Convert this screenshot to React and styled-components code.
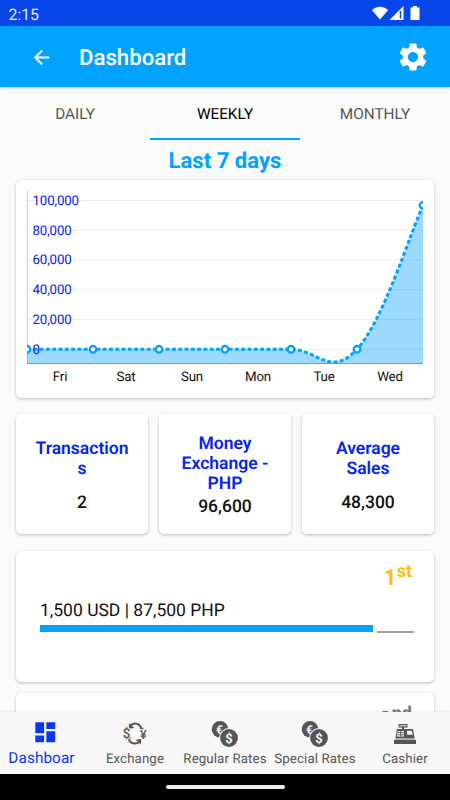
import React, { useState } from 'react';
import styled, { createGlobalStyle } from 'styled-components';
import { MdArrowBack, MdDashboard, MdSettings } from 'react-icons/md';

const GlobalStyle = createGlobalStyle`
  * {
    box-sizing: border-box;
  }
  body {
    margin: 0;
    background: #fafafa;
    font-family: Roboto, "Liberation Sans", sans-serif;
    text-rendering: geometricPrecision;
  }
`;

const Screen = styled.div`
  display: flex;
  flex-direction: column;
  width: 450px;
  height: 800px;
  overflow: hidden;
  background: #fafafa;
`;
const StatusBar = styled.div`
  display: flex;
  flex: none;
  align-items: center;
  justify-content: space-between;
  height: 26px;
  padding: 1px 29px 0 8.5px;
  font-size: 15.8px;
  color: #e4ecff;
  background: #0746e8;
`;
StatusBar.Time = styled.span`
  padding-top: 2px;
`;
const Header = styled.header`
  position: relative;
  display: flex;
  flex: none;
  align-items: center;
  height: 61px;
  padding: 1px 20px 0 30px;
  color: #fff;
  background: #00a2ff;
  box-shadow: 0 1px 3px rgba(0,0,0,.22);
`;
Header.Title = styled.h1`
  flex: 1;
  margin: 0 0 0 26px;
  padding-top: 2px;
  font-size: 22.2px;
  font-weight: 500;
`;
const Tabs = styled.div`
  display: flex;
  flex: none;
  height: 53px;
`;
const Tab = styled.button`
  flex: 1;
  padding: 3px 0 0;
  font-family: inherit;
  font-size: 15.3px;
  line-height: 20px;
  text-rendering: inherit;
  color: ${props => (props.$active ? '#000' : '#555')};
  background: none;
  border: 0;
  border-bottom: 2px solid ${props => (props.$active ? '#00a2ff' : 'transparent')};
`;
const Content = styled.main`
  display: flex;
  flex: 1;
  flex-direction: column;
  min-height: 0;
  padding: 0 16px;
  overflow: hidden;
`;
const Period = styled.h2`
  flex: none;
  height: 40px;
  margin: 0;
  font-size: 22.1px;
  font-weight: 700;
  line-height: 43px;
  color: #00a2ff;
  text-align: center;
`;
const Card = styled.section`
  flex: none;
  background: #fff;
  border-radius: 5px;
  box-shadow: 0 1px 3px rgba(0,0,0,.26);
`;
const ChartCard = styled(Card)`
  height: 217.5px;
  margin-bottom: 16.5px;
`;
const ChartSvg = styled.svg`
  display: block;
  font-family: Roboto, sans-serif;
  font-size: 13.3px;
  letter-spacing: -.15px;
`;
const Stats = styled.div`
  display: grid;
  flex: none;
  grid-template-columns: repeat(3, 132px);
  gap: 11px;
  height: 120px;
  margin-bottom: 16.5px;
`;
const StatCard = styled(Card)`
  display: flex;
  flex-direction: column;
  gap: ${props => (props.$tight ? '1px' : '11px')};
  align-items: center;
  padding-top: ${props => (props.$tight ? '19.500px' : '25px')};
`;
StatCard.Label = styled.div`
  width: 96px;
  font-size: 17.5px;
  font-weight: 600;
  line-height: 20.3px;
  color: #0524ec;
  text-align: center;
  word-break: break-word;
`;
StatCard.Value = styled.div`
  font-size: 17.5px;
  font-weight: 500;
  line-height: 24px;
  color: #111;
`;
const RankCard = styled(Card)`
  display: flex;
  flex-direction: column;
  height: 131.5px;
  margin-bottom: 10.5px;
  padding: 12px 20px 0 24px;
`;
const Place = styled.div`
  display: flex;
  align-self: flex-end;
  height: 37px;
  padding-right: 2px;
  font-size: 22.4px;
  font-weight: 700;
  line-height: 31px;
  color: ${props => props.$color};
`;
Place.Suffix = styled.span`
  font-size: 18px;
  line-height: 18px;
`;
const Amount = styled.div`
  height: 25px;
  font-size: 17.5px;
  line-height: 23px;
  color: #111;
`;
const Progress = styled.div`
  display: flex;
  gap: 4px;
  align-items: flex-end;
  height: 8.5px;
`;
Progress.Done = styled.div`
  height: 7.5px;
  margin-bottom: 1px;
  background: #00a2ff;
`;
Progress.Rest = styled.div`
  flex: 1;
  height: 2px;
  background: #a3a3a3;
`;
const BottomNav = styled.nav`
  position: relative;
  display: grid;
  flex: none;
  grid-template-columns: repeat(5, 1fr);
  height: 62px;
  background: #f7f7f7;
  box-shadow: 0 -1px 2px rgba(0,0,0,.06);
`;
const NavItem = styled.button`
  display: flex;
  flex-direction: column;
  align-items: center;
  padding: ${props => (props.$active ? '5px' : '7px')} 0 0;
  font-family: inherit;
  text-rendering: inherit;
  color: ${props => (props.$active ? '#0738f0' : '#555')};
  background: none;
  border: 0;
`;
NavItem.Icon = styled.span`
  display: flex;
  align-items: center;
  justify-content: center;
  height: 30px;
`;
NavItem.Label = styled.span`
  padding-top: ${props => (props.$active ? '1px' : 0)};
  padding-right: ${props => (props.$active ? '7px' : 0)};
  font-size: ${props => (props.$active ? '15.3px' : '13.3px')};
  line-height: 21px;
  letter-spacing: .1px;
  white-space: nowrap;
`;
const GestureBar = styled.div`
  display: flex;
  flex: none;
  align-items: center;
  justify-content: center;
  height: 26px;
  background: #000;
`;
GestureBar.Handle = styled.div`
  width: 119px;
  height: 4px;
  background: #eee;
  border-radius: 2px;
`;

const StatusIcons = () => (
  <svg width="52" height="20" viewBox="0 0 52 20">
    <path d="M2.800 6Q11 -.5 19.200 6L11 15.500Z" fill="#fff" />
    <path d="M20.500 16L34.500 2V16Z" fill="#fff" />
    <path d="M31.500 7V14.500" stroke="#0746e8" strokeWidth="1.500" />
    <path d="M41.500 3.500h2.500V2h4v1.500h2.500V16H41.500V3.500Z" fill="#fff" />
  </svg>
);

const ExchangeIcon = () => (
  <svg width="30" height="28" viewBox="0 0 30 28" fill="currentColor" textAnchor="middle">
    <path d="M10.500 5.500Q15 1.800 19 4.800Q21 6.500 21.500 9" fill="none" stroke="currentColor" strokeWidth="2" />
    <path d="M9 3.200l-.3 5.600 5.600-.8zM23.800 7.500l-1.500 4.200-4-2.200z" />
    <path d="M8.500 18.500Q9.500 22.500 13 23.300Q16.500 24 19.500 22" fill="none" stroke="currentColor" strokeWidth="2" />
    <path d="M21 24.500l.3-5.600-5.600.8zM6.200 20l1.500-4.200 4 2.200z" />
    <text x="6.500" y="18.200" fontSize="13.500" fontWeight="500" stroke="#f7f7f7" strokeWidth="2" paintOrder="stroke">$</text>
    <text x="23.300" y="18.500" fontSize="12.500" fontWeight="500" stroke="#f7f7f7" strokeWidth="2" paintOrder="stroke">¥</text>
  </svg>
);

const RatesIcon = () => (
  <svg width="28" height="28" viewBox="0 0 28 28" fontWeight="700" textAnchor="middle">
    <circle cx="9" cy="9.300" r="8.300" fill="currentColor" />
    <text x="8.500" y="13.500" fontSize="12" fill="#f7f7f7">€</text>
    <circle cx="18" cy="18" r="10" fill="#f7f7f7" />
    <circle cx="18" cy="18" r="8.900" fill="currentColor" />
    <text x="18" y="22.600" fontSize="13" fill="#f7f7f7">$</text>
  </svg>
);

const CashierIcon = () => (
  <svg width="24" height="22" viewBox="0 0 24 22" fill="currentColor">
    <path d="M5.500 1h9v3.500h-3.500V6h9l1.800 10.500h-19.600L4 6h5V4.500H5.500z" />
    <path d="M6.500 2.200h7v1h-7zM14 7.800h4.800l.8 4h-5.600z" fill="#f7f7f7" />
    <path d="M4.800 8h6.200v5.500H3.800z" fill="#f7f7f7" />
    <path d="M5 9.600h6M4.500 11.800h6.500M7.700 8v5.500" fill="none" stroke="currentColor" strokeWidth=".9" />
    <path d="M1 16h22" stroke="#f7f7f7" />
    <path d="M1 16.800h22v4.200H1z" />
  </svg>
);

const SCALE = [
  { label: '100,000', y: 20.5 },
  { label: '80,000', y: 50.4 },
  { label: '60,000', y: 80.0 },
  { label: '40,000', y: 109.6 },
  { label: '20,000', y: 139.4 },
  { label: '0', y: 169.3 },
];
const DAYS = ['Fri', 'Sat', 'Sun', 'Mon', 'Tue', 'Wed'];
const POINTS = [0, 0, 0, 0, 0, 0, 96600];
const CURVE = 'M11 169.300H275C301.400 169.300 314.600 198 341 169.300C367.400 140.500 393.800 54 407 25.300';

const pointX = i => 11 + i * 66;
const pointY = value => 169.3 - value * 0.00149;

const SalesChart = () => (
  <ChartSvg width="418" height="217" viewBox="0 0 418 217">
    <defs>
      <clipPath id="plot"><rect x="11" y="11" width="396" height="173" /></clipPath>
    </defs>
    {SCALE.map(({ label, y }) => (
      <line key={label} x1="11" x2="407" y1={y} y2={y} stroke="#ececec" />
    ))}
    <line x1="11.500" x2="11.500" y1="11" y2="183" stroke="#d2d2d2" />
    <g clipPath="url(#plot)">
      <path d={`${CURVE}V183.500H11Z`} fill="#00a2ff" fillOpacity=".39" />
      <line x1="11" x2="407" y1="183.500" y2="183.500" stroke="#5fa5cc" />
      <path d={CURVE} fill="none" stroke="#00a2ff" strokeWidth="3" strokeDasharray="4 2.300" />
      {POINTS.map((value, i) => (
        <circle
          key={pointX (i)}
          cx={pointX (i)}
          cy={pointY (value)}
          r="3.300"
          fill="#fff"
          stroke="#00a2ff"
          strokeWidth="2.300"
        />
      ))}
    </g>
    {SCALE.map(({ label, y }) => (
      <text key={label} x="16.500" y={y + 4.2} fill="#0a1ee0">{label}</text>
    ))}
    {DAYS.map((day, i) => (
      <text key={day} x={44 + i * 66} y="200.500" fill="#111" textAnchor="middle">{day}</text>
    ))}
  </ChartSvg>
);

const STATS = [
  { label: 'Transactions', value: '2' },
  { label: 'Money Exchange - PHP', value: '96,600', tight: true },
  { label: 'Average Sales', value: '48,300' },
];

const NAV = [
  { label: 'Dashboar', icon: <MdDashboard size={26.5} /> },
  { label: 'Exchange', icon: <ExchangeIcon /> },
  { label: 'Regular Rates', icon: <RatesIcon /> },
  { label: 'Special Rates', icon: <RatesIcon /> },
  { label: 'Cashier', icon: <CashierIcon /> },
];

const App = () => {
  const [tab, setTab] = useState ('WEEKLY');
  const [page, setPage] = useState ('Dashboar');

  return (
    <Screen>
      <GlobalStyle />
      <StatusBar>
        <StatusBar.Time>2:15</StatusBar.Time>
        <StatusIcons />
      </StatusBar>
      <Header>
        <MdArrowBack size={23} />
        <Header.Title>Dashboard</Header.Title>
        <MdSettings size={34} />
      </Header>
      <Tabs>
        {['DAILY', 'WEEKLY', 'MONTHLY'].map(name => (
          <Tab key={name} $active={name === tab} onClick={() => setTab (name)}>{name}</Tab>
        ))}
      </Tabs>
      <Content>
        <Period>Last 7 days</Period>
        <ChartCard>
          <SalesChart />
        </ChartCard>
        <Stats>
          {STATS.map(({ label, value, tight }) => (
            <StatCard key={label} $tight={tight}>
              <StatCard.Label>{label}</StatCard.Label>
              <StatCard.Value>{value}</StatCard.Value>
            </StatCard>
          ))}
        </Stats>
        <RankCard>
          <Place $color="#ffbf0b">
            1
            <Place.Suffix>st</Place.Suffix>
          </Place>
          <Amount>1,500 USD | 87,500 PHP</Amount>
          <Progress>
            <Progress.Done style={{ width: `${(87500 / 98200) * 100}%` }} />
            <Progress.Rest />
          </Progress>
        </RankCard>
        <RankCard>
          <Place $color="#777">
            2
            <Place.Suffix>nd</Place.Suffix>
          </Place>
        </RankCard>
      </Content>
      <BottomNav>
        {NAV.map(({ label, icon }) => (
          <NavItem key={label} $active={label === page} onClick={() => setPage (label)}>
            <NavItem.Icon>{icon}</NavItem.Icon>
            <NavItem.Label $active={label === page}>{label}</NavItem.Label>
          </NavItem>
        ))}
      </BottomNav>
      <GestureBar>
        <GestureBar.Handle />
      </GestureBar>
    </Screen>
  );
};

export default App;
